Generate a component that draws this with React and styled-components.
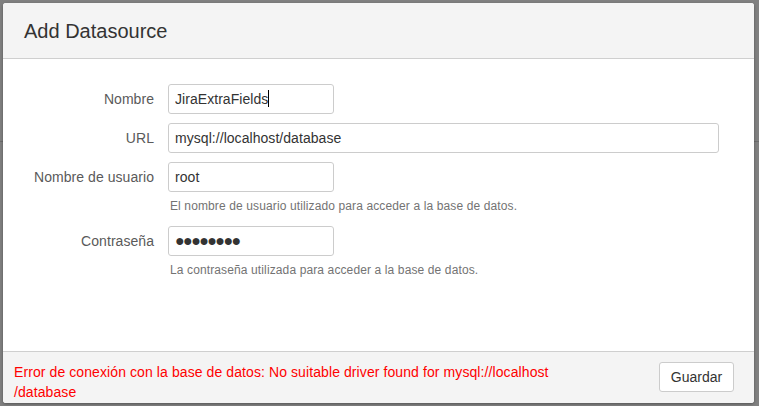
import React from "react";
import styled, { createGlobalStyle } from "styled-components";

const Global = createGlobalStyle`
  html, body { margin: 0; padding: 0; }
  body {
    width: 759px;
    height: 406px;
    overflow: hidden;
    font-family: "Liberation Sans", Arial, sans-serif;
    background: linear-gradient(
      to bottom,
      #808080 0, #808080 141px,
      #6c6c6c 141px, #6c6c6c 142px,
      #808080 142px
    );
  }
  * { box-sizing: border-box; }
`;

const Backdrop = styled.div`
  padding: 3px 5px 3px 3px;
  height: 406px;
`;

const Modal = styled.div`
  width: 751px;
  height: 400px;
  background: #fff;
  border-radius: 3px;
  box-shadow: 0 1px 3px rgba(0, 0, 0, 0.35);
  display: flex;
  flex-direction: column;
  overflow: hidden;
`;

const Header = styled.div`
  height: 56px;
  flex: none;
  background: #f4f4f4;
  border-bottom: 1px solid #cfcfcf;
  display: flex;
  align-items: center;
  padding-left: 21px;
`;

const Title = styled.h2`
  margin: 0;
  font-size: 20px;
  font-weight: normal;
  color: #333;
  line-height: 24px;
`;

const Body = styled.div`
  flex: 1;
  padding: 25px 35px 0 11px;
`;

const Form = styled.div`
  display: flex;
  flex-direction: column;
  gap: 9px;
`;

const Field = styled.div`
  display: grid;
  grid-template-columns: 140px 1fr;
  column-gap: 14px;
  align-items: start;
`;

const Label = styled.label`
  text-align: right;
  font-size: 14px;
  line-height: 30px;
  color: #5a5a5a;
  letter-spacing: 0.05px;
`;

const Control = styled.div`
  display: flex;
  flex-direction: column;
  align-items: flex-start;
`;

const InputWrap = styled.div`
  position: relative;
  width: ${(p) => (p.$wide ? "100%" : "166px")};
`;

const Input = styled.input`
  display: block;
  width: 100%;
  height: 30px;
  margin: 0;
  padding: 0 6px;
  border: 1px solid #ccc;
  border-radius: 3px;
  background: #fff;
  font-family: "Liberation Sans", Arial, sans-serif;
  font-size: ${(p) => (p.$dots ? "16px" : "14px")};
  letter-spacing: ${(p) => (p.$dots ? "-1.6px" : "0.05px")};
  color: #333;
  outline: none;
`;

const CaretLayer = styled.div`
  position: absolute;
  left: 7px;
  top: 6px;
  font-size: 14px;
  line-height: 17px;
  letter-spacing: 0.05px;
  pointer-events: none;
  white-space: pre;
  display: flex;
  align-items: center;
`;

const Ghost = styled.span`
  color: transparent;
`;

const Caret = styled.span`
  display: inline-block;
  width: 1px;
  height: 17px;
  background: #000;
`;

const Help = styled.p`
  margin: 6px 0 2px 2px;
  font-size: 12px;
  line-height: 17px;
  letter-spacing: 0.12px;
  color: #737373;
`;

const Footer = styled.div`
  height: 52px;
  flex: none;
  background: #f4f4f4;
  border-top: 1px solid #cfcfcf;
  display: flex;
  align-items: flex-start;
  justify-content: space-between;
  padding: 10px 20px 0 11px;
`;

const ErrorText = styled.div`
  font-size: 14px;
  line-height: 20px;
  letter-spacing: 0.09px;
  color: #ff0000;
`;

const Button = styled.button`
  width: 75px;
  height: 30px;
  margin-top: 0;
  padding: 0;
  background: #fff;
  border: 1px solid #ccc;
  border-radius: 3px;
  font-family: "Liberation Sans", Arial, sans-serif;
  font-size: 14px;
  color: #333;
`;

function TextField({ label, value, wide, caret, dots, help }) {
  return (
    <Field>
      <Label>{label}</Label>
      <Control>
        <InputWrap $wide={wide}>
          <Input type="text" value={value} readOnly $dots={dots} />
          {caret && (
            <CaretLayer>
              <Ghost>{value}</Ghost>
              <Caret />
            </CaretLayer>
          )}
        </InputWrap>
        {help && <Help>{help}</Help>}
      </Control>
    </Field>
  );
}

export default function App() {
  return (
    <>
      <Global />
      <Backdrop>
        <Modal>
          <Header>
            <Title>Add Datasource</Title>
          </Header>
          <Body>
            <Form>
              <TextField label="Nombre" value="JiraExtraFields" caret />
              <TextField label="URL" value="mysql://localhost/database" wide />
              <TextField
                label="Nombre de usuario"
                value="root"
                help="El nombre de usuario utilizado para acceder a la base de datos."
              />
              <TextField
                label="Contraseña"
                value="●●●●●●●●"
                dots
                help="La contraseña utilizada para acceder a la base de datos."
              />
            </Form>
          </Body>
          <Footer>
            <ErrorText>
              Error de conexión con la base de datos: No suitable driver found for mysql://localhost
              <br />
              /database
            </ErrorText>
            <Button type="button">Guardar</Button>
          </Footer>
        </Modal>
      </Backdrop>
    </>
  );
}
